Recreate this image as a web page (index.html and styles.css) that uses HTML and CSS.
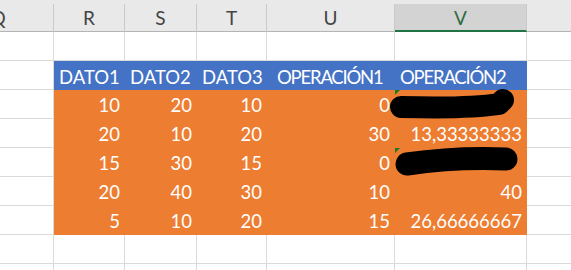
FILE: index.html
```html
<!DOCTYPE html>
<html lang="es">
<head>
<meta charset="utf-8">
<title>Hoja</title>
<link rel="stylesheet" href="styles.css">
</head>
<body>
<div class="page">
  <div class="colheads">
    <div class="ch">Q</div>
    <div class="ch">R</div>
    <div class="ch">S</div>
    <div class="ch">T</div>
    <div class="ch">U</div>
    <div class="ch sel">V</div>
    <div class="ch last"></div>
  </div>
  <div class="sheet">
    <div class="c"></div><div class="c"></div><div class="c"></div><div class="c"></div><div class="c"></div><div class="c"></div><div class="c last"></div>

    <div class="c"></div>
    <div class="c b">DATO1</div><div class="c b">DATO2</div><div class="c b">DATO3</div><div class="c b u">OPERACIÓN1</div><div class="c b v">OPERACIÓN2</div>
    <div class="c last"></div>

    <div class="c"></div>
    <div class="c o">10</div><div class="c o">20</div><div class="c o">10</div><div class="c o">0</div><div class="c o v"></div>
    <div class="c last"></div>

    <div class="c"></div>
    <div class="c o">20</div><div class="c o">10</div><div class="c o">20</div><div class="c o">30</div><div class="c o v">13,33333333</div>
    <div class="c last"></div>

    <div class="c"></div>
    <div class="c o">15</div><div class="c o">30</div><div class="c o">15</div><div class="c o">0</div><div class="c o v"></div>
    <div class="c last"></div>

    <div class="c"></div>
    <div class="c o">20</div><div class="c o">40</div><div class="c o">30</div><div class="c o">10</div><div class="c o v">40</div>
    <div class="c last"></div>

    <div class="c"></div>
    <div class="c o">5</div><div class="c o">10</div><div class="c o">20</div><div class="c o">15</div><div class="c o v">26,66666667</div>
    <div class="c last"></div>

    <div class="c"></div><div class="c"></div><div class="c"></div><div class="c"></div><div class="c"></div><div class="c"></div><div class="c last"></div>
    <div class="c"></div><div class="c"></div><div class="c"></div><div class="c"></div><div class="c"></div><div class="c"></div><div class="c last"></div>
  </div>
  <svg class="marks" width="571" height="270" viewBox="0 0 571 270" aria-hidden="true">
    <path d="M401 107 C440 108 480 107 499 104 L503 100" fill="none" stroke="#000" stroke-width="22" stroke-linecap="round" stroke-linejoin="round"/>
    <path d="M407 164 Q455 157 506 159" fill="none" stroke="#000" stroke-width="23" stroke-linecap="round"/>
    <polygon points="395,90 400,90 395,95" fill="#1e7a1e"/>
    <polygon points="395,148 400,148 395,153" fill="#1e7a1e"/>
  </svg>
</div>
</body>
</html>
```
FILE: styles.css
```css
html, body {
  margin: 0;
  padding: 0;
  background: #fff;
  overflow: hidden;
}
.page {
  position: relative;
  width: 571px;
  height: 270px;
  overflow: hidden;
  font-family: "Lato", "Open Sans", sans-serif;
  font-size: 18.5px;
}
.colheads,
.sheet {
  display: grid;
  grid-template-columns: 111px 71px 72px 70px 128px 132px 200px;
  margin-left: -57px;
}
.colheads {
  background: #e9e9e9;
  padding-top: 4px;
}
.ch {
  box-sizing: border-box;
  height: 28px;
  border-right: 1px solid #c9c9c9;
  border-bottom: 1px solid #b4b4b4;
  color: #444;
  text-align: center;
  line-height: 27px;
  font-size: 19px;
}
.ch.sel {
  background: #d3d3d3;
  color: #2f6a44;
  border-bottom: 2px solid #217346;
}
.ch.last { border-right: none; }
.sheet {
  grid-auto-rows: 29px;
}
.c {
  box-sizing: border-box;
  border-right: 1px solid #dadada;
  border-bottom: 1px solid #dadada;
  color: #fff;
  white-space: nowrap;
  line-height: 28px;
}
.c.last { border-right: none; }
.c.b {
  background: #4472c4;
  border-color: #4472c4;
  padding: 2px 0 0 5px;
}
.c.b.u,
.c.b.v {
  letter-spacing: -1.2px;
}
.c.b.u { padding-left: 10px; }
.c.o {
  background: #ed7d31;
  border-color: #ed7d31;
  text-align: right;
  padding: 1px 4px 0 0;
}
.marks {
  position: absolute;
  left: 0;
  top: 0;
  pointer-events: none;
}
```
